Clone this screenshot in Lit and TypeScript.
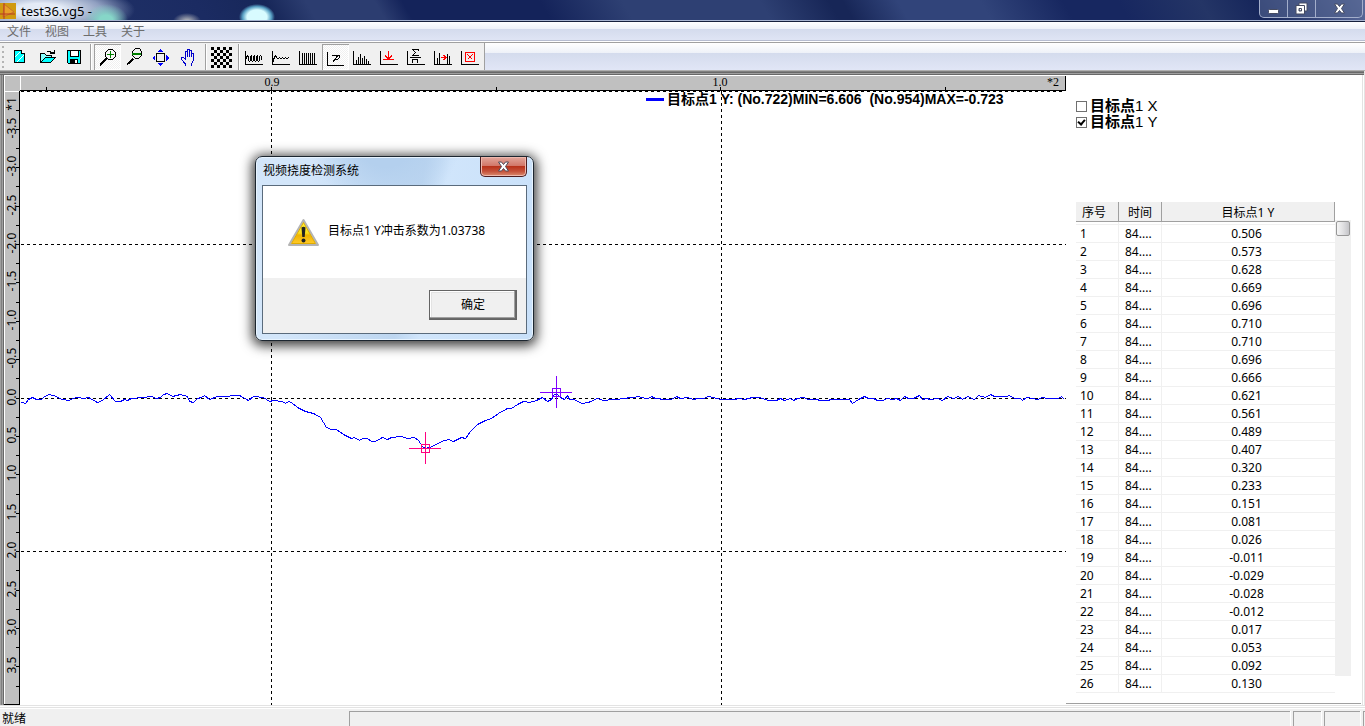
import { LitElement, html, svg, css } from "lit";
import { customElement, state } from "lit/decorators.js";

const VALUES = [
  "0.506", "0.573", "0.628", "0.669", "0.696", "0.710", "0.710", "0.696", "0.666",
  "0.621", "0.561", "0.489", "0.407", "0.320", "0.233", "0.151", "0.081", "0.026",
  "-0.011", "-0.029", "-0.028", "-0.012", "0.017", "0.053", "0.092", "0.130",
];

const CURVE =
  "20,402 22,402 25,403 28,399 32,397 36,399 41,399 44,396 49,394 56,396 61,399 69,400 72,398 77,397 83,398 88,397 " +
  "97,402 102,400 109,394 115,401 120,401 124,399 127,400 131,398 142,397 151,396 156,398 160,397 163,394 167,393 " +
  "172,396 180,394 187,396 189,401 193,402 197,398 201,397 204,395 209,399 217,396 227,396 232,395 239,395 248,400 " +
  "253,396 263,397 269,401 273,400 282,401 285,403 288,401 291,402 297,407 305,411 313,413 320,417 326,427 331,429 " +
  "336,429 343,434 351,438 354,437 359,440 362,438 367,438 371,441 375,441 382,437 387,439 391,437 401,436 407,438 " +
  "414,437 418,440 422,446 425,448 429,447 436,444 441,441 448,439 453,441 461,437 465,438 470,431 477,424 485,420 " +
  "491,418 498,413 507,408 511,408 517,404 523,401 529,402 536,400 542,397 547,401 551,399 553,395 556,393 560,397 " +
  "564,399 567,395 569,399 573,399 582,403 588,402 597,398 603,400 613,399 626,398 628,397 633,397 638,396 645,398 " +
  "648,398 651,396 655,398 659,398 661,399 671,399 676,396 680,398 687,397 693,399 697,398 703,398 708,396 713,397 " +
  "720,399 733,399 739,398 744,399 752,397 759,397 768,400 776,400 780,398 784,400 790,398 793,400 797,398 803,397 " +
  "808,399 816,399 820,400 827,400 831,399 849,399 852,403 858,399 864,396 868,398 873,398 877,400 882,400 887,398 " +
  "892,399 896,398 900,400 904,396 908,398 913,398 919,395 922,399 926,398 930,399 937,398 942,400 947,396 953,398 " +
  "958,396 962,399 967,396 974,399 978,395 985,397 990,394 994,396 1006,396 1009,395 1014,398 1020,398 1022,400 " +
  "1026,397 1032,398 1037,399 1042,397 1047,398 1058,398 1061,396 1064,399";

const axes = svg`<path class="k" d="M4.500 7V20.500H22"/>`;

const icons: Record<string, unknown> = {
  new: svg`<path fill="#0ff" stroke="#000" d="M8.500 6.500H15.500L18.500 9.500V18.500H8.500Z"/><path fill="#fff" stroke="#000" d="M15.500 6.500V9.500H18.500"/><path stroke="#fff" d="M9 13L14 8M11 18L18 11"/>`,
  open: svg`<path fill="#8ff" stroke="#000" d="M7.500 18.500V9.500H11.500L13.500 11.500H18.500V13.500H12.500L7.500 18.500"/><path fill="#0ff" stroke="#000" d="M7.500 18.500L12.500 13.500H22.500L17.500 18.500Z"/><path class="k" d="M14 7.500H16.500L18.500 8.500H21M21.500 5.500V10M17 9.500H21"/>`,
  save: svg`<path fill="#0ff" stroke="#000" d="M7.500 6.500H20.500V19.500H8.500L7.500 18.500Z"/><path fill="#fff" stroke="#000" d="M10.500 6.500H18.500V12.500H10.500Z"/><path fill="#000" d="M10 15H18V20H10Z"/><path fill="#fff" d="M15 16H17V19H15Z"/>`,
  zoomin: svg`<path class="k" d="M14.500 5.500H18.500L21.500 8.500V12.500L18.500 15.500H14.500L11.500 12.500V8.500Z"/><path fill="#008000" d="M13 10H20V11H13ZM16 7H17V14H16Z"/><path class="k" stroke-width="2" d="M12.500 14.500L6 21.500"/>`,
  zoomout: svg`<path class="k" d="M14.500 4.500H18.500L20.500 7.500V11.500L17.500 14.500H14.500L11.500 11.500V7.500Z"/><path fill="#008000" d="M11 9H20V11H11Z"/><path class="k" stroke-width="2" d="M12.500 14.500L6 20.500"/>`,
  pan: svg`<rect class="k" x="8.500" y="9.500" width="8" height="8"/><path fill="#00f" d="M10 8H15L12.500 5ZM10 19H15L12.500 22.500ZM7 11V17L4 14ZM18 11V17L21 14Z"/>`,
  hand: svg`<path stroke="#00c" fill="none" d="M10.500 22V20L6.500 15.500V13.500H8.500L10.500 15.500V7.500H12.500V13V5.500H14.500V13V6.500H16.500V13V9.500H18.500V16.500L16.500 20V22"/>`,
  check: svg`${Array.from({ length: 49 }, (_, i) => i).filter((i) => i % 2 === 0).map((i) => svg`<rect x=${3 + (i % 7) * 3} y=${3 + Math.floor(i / 7) * 3} width="3" height="3"/>`)}`,
  wave: svg`${axes}<path class="k" d="M5.500 15V13.500L6.500 11.500L7.500 12.500V16.500L8.500 17.500L9.500 16.500V12.500L10.500 11.500V16.500L11.500 17.500L12.500 16.500V12.500L13.500 11.500V16.500L14.500 17.500L15.500 16.500V12.500L16.500 11.500V16.500L17.500 17.500L18.500 16.500V12.500L19.500 11.500L20.500 12.500V16"/>`,
  decay: svg`${axes}<path class="k" d="M5.500 18V15.500L7.500 11.500L9.500 14.500H10.500L11.500 13.500L12.500 14.500H13.500L14.500 13.500L15.500 14.500H16.500L17.500 13.500L18.500 14.500H19.500L20.500 13.500L21.500 14.500"/>`,
  bars: svg`${axes}<path class="k" d="M7.500 9V20M9.500 9V20M11.500 9V20M13.500 9V20M15.500 9V20M17.500 9V20M19.500 9V20"/>`,
  peak: svg`<path class="k" d="M5.500 8V21.500H22"/><path class="k" d="M10 11.500H17.500V13.500L15.500 15.500H11.500M15.500 12L10.500 18.500"/>`,
  spectrum: svg`${axes}<path class="k" d="M7.500 16V20M9.500 13V20M11.500 10V20M13.500 14V20M15.500 12V20M17.500 15V20M19.500 17V20"/>`,
  zero: svg`${axes}<path stroke="#f00" fill="none" d="M7 15.500H18M12.500 7V15M9 11.500L12.500 15L16 11.500M11 13.500H14"/>`,
  mean: svg`${axes}<path class="k" d="M15.500 6.500V5.500H9.500L12.500 8.500L9.500 11.500H15.500V10.500M7 13.500H18M9.500 19V15.500H14.500V19"/>`,
  shift: svg`${axes}<path class="k" d="M7.500 14V20M9.500 9V20M17.500 10V20M19.500 12V20"/><path stroke="#f00" fill="none" d="M11 13.500H16M13.500 11L16 13.500L13.500 16"/>`,
  clear: svg`${axes}<path stroke="#f00" fill="none" d="M8.500 8.500H17.500V17.500H8.500ZM10.500 10.500L15.500 15.500M15.500 10.500L10.500 15.500"/>`,
};

const TOOLS: string[][] = [
  ["new", "open", "save"],
  ["zoomin", "zoomout", "pan", "hand"],
  ["check"],
  ["wave", "decay", "bars", "peak", "spectrum", "zero", "mean", "shift", "clear"],
];
const TOOL_NAMES: Record<string, string> = {
  new: "新建", open: "打开", save: "保存", zoomin: "放大", zoomout: "缩小", pan: "全图", hand: "平移",
  check: "棋盘", wave: "波形", decay: "衰减", bars: "采样", peak: "冲击系数", spectrum: "频谱",
  zero: "归零", mean: "平均", shift: "平移曲线", clear: "清除",
};

@customElement("deflection-plot")
class DeflectionPlot extends LitElement {
  static styles = css`
    :host { display: block; flex: 1; min-width: 0; overflow: hidden; }
    .plot { display: block; width: 100%; height: 100%; shape-rendering: crispEdges; }
    .ink { stroke: #000; fill: none; }
    .dash { stroke: #000; stroke-dasharray: 3 3; }
    .curve { stroke: #00f; fill: none; }
    .vlabel { font: 12px "Noto Sans", sans-serif; text-anchor: middle; }
    .hlabel { font: 12px "Liberation Serif", serif; text-anchor: middle; }
    .legend { font: bold 14px "Liberation Sans", "Noto Sans CJK SC", sans-serif; white-space: pre; }
  `;

  private marker(x: number, y: number, color: string) {
    return svg`<path stroke=${color} fill="none" d="M${x - 16} ${y}.500h32M${x}.500 ${y - 16}v32M${x - 4}.500 ${y - 4}.500h8v8h-8z"/>`;
  }

  render() {
    const half = Array.from({ length: 31 }, (_, i) => i - 15);
    return html`<svg class="plot" role="img" aria-label="目标点1 Y">
      <g transform="translate(-4 -75)">
        <rect x="4" y="75" width="1062" height="1" fill="#fff" />
        <rect x="5" y="76" width="15" height="629" fill="#c0c0c0" />
        <rect x="21" y="76" width="1045" height="15" fill="#c0c0c0" />
        <rect x="20" y="76" width="1" height="15" fill="#fff" />
        <rect x="5" y="91" width="15" height="1" fill="#fff" />
        <path class="ink" d="M20 90.500H1065.500V76M19.500 91V704.500H4" />
        <path class="dash" d="M21 91.500H1065M21 244.500H1066M21 398.500H1066M21 551.500H1066M271.500 91V705M721.500 91V705" />
        <path class="ink" d="M46.500 87V90M271.500 87V90M496.500 87V90M720.500 87V90M945.500 87V90" />
        ${half.map((i) => {
          const y = Math.floor(398 + i * 19.2);
          return svg`<path class="ink" d="M16 ${y}.500H19"/>`;
        })}
        ${half.filter((i) => i % 2 === 0).map((i) => {
          const y = Math.floor(398 + i * 19.2);
          return svg`<text class="vlabel" transform="translate(16 ${y - 1}) rotate(-90)">${(i / 4).toFixed(1) === "-0.0" ? "0.0" : (i / 4).toFixed(1)}</text>`;
        })}
        <text class="vlabel" transform="translate(16 104) rotate(-90)">*1</text>
        <text class="hlabel" x="272" y="86">0.9</text>
        <text class="hlabel" x="720" y="86">1.0</text>
        <text class="hlabel" x="1053" y="86">*2</text>
        <rect x="646" y="98" width="18" height="3" fill="#00f" />
        <text class="legend" x="667" y="104">目标点1 Y: (No.722)MIN=6.606  (No.954)MAX=-0.723</text>
        <polyline class="curve" points=${CURVE} transform="translate(0.500 0.500)" />
        ${this.marker(425, 448, "#ff0080")}
        ${this.marker(556, 392, "#8000ff")}
      </g>
    </svg>`;
  }
}

@customElement("message-dialog")
class MessageDialog extends LitElement {
  static styles = css`
    :host { position: absolute; left: 255px; top: 156px; font: 12px/16px "Noto Sans", "Noto Sans CJK SC", sans-serif; }
    .frame {
      box-sizing: border-box; width: 279px; height: 185px; border: 1px solid #1c2630; border-radius: 7px; padding: 0 6px 6px;
      display: flex; flex-direction: column;
      background: radial-gradient(circle at 130px -20px, #b4d0ee 0 30px, transparent 75px), linear-gradient(100deg, #d3e6fa 0 18%, #bdd6f0 55%, #d0e5fb 63%, #c8e0f9);
      box-shadow: inset 0 0 0 1px #e8f4ff, 0 2px 12px 3px rgba(0, 0, 0, 0.75);
    }
    .title { display: flex; justify-content: space-between; height: 28px; }
    .name { padding-top: 6px; padding-left: 1px; }
    .close {
      width: 47px; height: 20px; padding: 0; border: 1px solid #4c1d20; border-top: 0; border-radius: 0 0 5px 5px;
      background: linear-gradient(#e3a79c, #d2786a 45%, #b8321b 50%, #c5513a 75%, #da8d70); box-shadow: inset 0 0 0 1px #efb9ae;
      display: flex; justify-content: center; align-items: center;
    }
    .body { flex: 1; display: flex; flex-direction: column; border: 1px solid #5a6b7c; background: #f0f0f0; }
    .message { display: flex; align-items: center; gap: 9px; height: 92px; padding-left: 25px; background: #fff; }
    .text { padding-bottom: 3px; }
    .actions { flex: 1; display: flex; justify-content: flex-end; align-items: flex-start; padding: 12px 9px 0 0; }
    .ok {
      width: 88px; height: 30px; padding: 0; font: inherit; background: #f0f0f0; color: #000; border: 1px solid #646464;
      box-shadow: inset -1px -1px #696969, inset -2px -2px #a0a0a0, inset 1px 1px #fff, inset 2px 2px #e3e3e3;
    }
  `;

  render() {
    return html`<section class="frame" role="alertdialog" aria-label="视频挠度检测系统">
      <header class="title">
        <span class="name">视频挠度检测系统</span>
        <button class="close" aria-label="关闭" @click=${() => this.remove()}>
          <svg width="13" height="11"><path d="M1.500 1H4.500L6.500 3.500L8.500 1H11.500L8.500 5.500L11.500 10H8.500L6.500 7.500L4.500 10H1.500L4.500 5.500Z" fill="#fff" stroke="#4f4a58" /></svg>
        </button>
      </header>
      <div class="body">
        <div class="message">
          <svg width="31" height="29" viewBox="0 0 31 29">
            <defs><linearGradient id="amber" x2="0" y2="1"><stop offset="0" stop-color="#fff23c" /><stop offset="0.500" stop-color="#fbe01c" /><stop offset="0.600" stop-color="#f0b400" /><stop offset="1" stop-color="#ffc928" /></linearGradient></defs>
            <path d="M15.500 2L30 27H1Z" fill="#d2d2d2" stroke="#b4b4b4" stroke-width="2" stroke-linejoin="round" />
            <path d="M15.500 4.500L27.500 25.500H3.500Z" fill="url(#amber)" stroke="#e0ac00" />
            <path d="M13.500 9.500Q15.500 8 17.500 9.500L16.700 19H14.300Z" fill="#222" /><circle cx="15.500" cy="22.500" r="2" fill="#222" />
          </svg>
          <span class="text">目标点1 Y冲击系数为1.03738</span>
        </div>
        <div class="actions"><button class="ok" @click=${() => this.remove()}>确定</button></div>
      </div>
    </section>`;
  }
}

@customElement("app-root")
class AppRoot extends LitElement {
  @state() private showX = false;
  @state() private showY = true;

  static styles = css`
    :host {
      display: flex; flex-direction: column; position: relative; height: 100vh; overflow: hidden; background: #f0f0f0;
      font: 12px/16px "Noto Sans", "Noto Sans CJK SC", sans-serif; color: #000;
    }
    .titlebar {
      display: flex; justify-content: space-between; height: 20px; border-bottom: 1px solid #a8b4d0; box-shadow: 0 1px #17203c;
      margin-bottom: 1px;
      background:
        radial-gradient(ellipse 22px 16px at 106px 20px, #86d6c8 30%, transparent),
        radial-gradient(ellipse 95px 26px at 40px 10px, #e4ebf6 0 25%, #a9b8d5d0 65%, transparent),
        radial-gradient(ellipse 14px 8px at 187px 21px, #a1a5b0 20%, transparent),
        radial-gradient(ellipse 18px 13px at 257px 17px, #d8fbff 55%, #58a0c4 80%, transparent),
        linear-gradient(60deg, #22356a 0, #1b2b62 15%, #172759 20%, #2c3d70 23% 28%, #14235a 30% 40%, #2e4073 46% 56%, #172657 61% 62%, #31447a 66% 72%, #172760 78% 82%, #243566 88%, #16265b 92%, #5c6c9c);
    }
    .caption { display: flex; gap: 5px; }
    .doc { padding-top: 3px; font-size: 13px; }
    .winbtns { display: flex; height: 17px; margin-right: 2px; border: 1px solid #a3aecb; border-top: 0; border-radius: 0 0 5px 5px; background: #55659199; }
    .winbtn { display: flex; align-items: center; justify-content: center; width: 28px; padding: 0; border: 0; border-right: 1px solid #a3aecb; background: none; }
    .winbtn:last-child { width: 46px; border-right: 0; }
    .menubar {
      display: flex; gap: 14px; box-sizing: border-box; height: 21px; padding: 2px 7px 0; border-bottom: 1px solid #a0a0a0; box-shadow: inset 0 -1px #fff, inset 0 -2px #b6bcd0;
      background: linear-gradient(#fff, #eef1f8 7px, #d4dbed 7px, #e1e6f6);
    }
    .menu { color: #6d6d6d; text-decoration: none; }
    .toolbar { display: flex; height: 27px; background: linear-gradient(#fff, #eef1f8 10px, #d4dbed 10px, #e1e6f6); border-bottom: 1px solid #b0b0b0; }
    .tools { display: flex; padding-top: 1px; background: #f0f0f0; border-right: 1px solid #a0a0a0; }
    .grip { width: 2px; margin: 2px; background: repeating-linear-gradient(#b4b4b4 0 2px, transparent 2px 5px); }
    .group { display: flex; }
    .group + .group { border-left: 1px solid #a0a0a0; margin-left: 3px; padding-left: 3px; box-shadow: inset 1px 0 #fff; }
    .group + .group ~ .group { padding-left: 2px; }
    .tool { width: 27px; height: 26px; padding: 0; border: 0; background: none; }
    .tool.on { background: repeating-conic-gradient(#fff 0 25%, #f0f0f0 0 50%) 0 0 / 2px 2px; box-shadow: inset 1px 1px #a0a0a0, inset -1px -1px #fff; }
    .glyph { display: block; shape-rendering: crispEdges; }
    .glyph .k { stroke: #000; fill: none; }
    .workspace {
      flex: 1; min-height: 0; display: flex; padding: 4px 1px 0 4px; border-right: 1px solid #e3e3e3;
      background:
        linear-gradient(#808080 1px, #696969 1px 2px, #a0a0a0 2px 3px, #696969 3px) no-repeat 0 0 / 100% 4px,
        linear-gradient(90deg, #a0a0a0 1px, #808080 1px 2px, #a0a0a0 2px 3px, #696969 3px) no-repeat 0 0 / 4px 100%,
        #fff;
    }
    .side { width: 297px; display: flex; flex-direction: column; padding: 23px 1px 0 0; box-sizing: border-box; border-right: 1px solid #e3e3e3; }
    .series { display: flex; flex-direction: column; padding-left: 10px; height: 104px; }
    .pick { display: flex; align-items: center; gap: 3px; height: 16px; font: 15px/16px "Liberation Sans", "Noto Sans CJK SC", sans-serif; }
    .pick b { font-weight: 700; }
    .box { appearance: none; width: 11px; height: 11px; margin: 0; border: 1px solid #707070; background: #fff; }
    .box:checked { position: relative; }
    .box:checked::after { content: ""; position: absolute; left: 2px; top: 0; width: 3px; height: 5px; border: solid #000; border-width: 0 2px 2px 0; transform: rotate(40deg); }
    .listing { flex: 1; display: flex; align-items: flex-start; margin-bottom: 1px; border-bottom: 1px solid #a0a0a0; padding: 0 10px; }
    .grid { flex: 1; border-collapse: separate; border-spacing: 0; table-layout: fixed; width: 260px; }
    .grid th { height: 17px; padding: 2px 0 0; font-weight: 400; background: #f0f0f0; border-right: 1px solid #a0a0a0; border-bottom: 1px solid #a0a0a0; }
    .grid th:first-child { padding-right: 6px; }
    .grid td { height: 17px; padding: 0; line-height: 17px; border-bottom: 1px solid #f0f0f0; border-right: 1px solid #f0f0f0; }
    .grid td:first-child { padding-left: 4px; }
    .grid td:nth-child(2) { padding-left: 6px; }
    .grid td:last-child { border-right: 0; text-align: center; padding-right: 4px; }
    .grid .gap td { height: 2px; }
    .c1 { width: 43px; }
    .c2 { width: 43px; }
    .track { width: 16px; height: 456px; margin-top: 18px; box-sizing: border-box; background: #f0f0f0; padding: 1px; }
    .thumb { box-sizing: border-box; height: 15px; border: 1px solid #979797; border-radius: 2px; background: linear-gradient(90deg, #f5f5f5, #e0e0e2 50%, #c4c4c8); }
    .rim { height: 4px; background: linear-gradient(#e3e3e3 1px, #fff 1px 2px, #e3e3e3 2px 3px, #fff 3px); }
    .status { display: flex; gap: 3px; height: 17px; box-sizing: border-box; padding-top: 2px; }
    .ready { width: 344px; padding-left: 2px; line-height: 16px; }
    .pane { border: solid #a0a0a0; border-width: 1px 0 0 1px; box-shadow: 1px 0 #fff; width: 27px; }
    .pane.wide { flex: 1; }
    .pane.mid { width: 35px; }
    .pane.end { width: 1px; }
  `;

  render() {
    return html`
      <header class="titlebar">
        <div class="caption">
          <svg width="16" height="19"><rect y="3" width="16" height="16" fill="#d09a10" /><path d="M4 4L14 12L3 17Z" fill="#e8a02a" stroke="#c8702a" /><path d="M0 14H15M4 3V19" stroke="#b83a20" /></svg>
          <span class="doc">test36.vg5 -</span>
        </div>
        <div class="winbtns">
          <button class="winbtn" aria-label="最小化"><svg width="13" height="12"><rect x="1.500" y="6.500" width="10" height="4" rx="1" fill="#fff" stroke="#454b62" /></svg></button>
          <button class="winbtn" aria-label="还原"><svg width="13" height="13"><path d="M4 1H12V9H4Z" fill="#fff" stroke="#454b62" /><path fill-rule="evenodd" d="M1 3.500H9.500V12H1ZM4 6.500V9H6.500V6.500Z" fill="#fff" stroke="#454b62" /></svg></button>
          <button class="winbtn" aria-label="关闭"><svg width="13" height="11"><path d="M1.500 1H4.500L6.500 3.500L8.500 1H11.500L8.500 5.500L11.500 10H8.500L6.500 7.500L4.500 10H1.500L4.500 5.500Z" fill="#fff" stroke="#454b62" /></svg></button>
        </div>
      </header>
      <nav class="menubar">
        ${["文件", "视图", "工具", "关于"].map((m) => html`<a class="menu" href="#">${m}</a>`)}
      </nav>
      <div class="toolbar">
        <div class="tools">
          <span class="grip"></span>
          ${TOOLS.map((group) => html`<div class="group">${group.map((t) => html`
            <button class="tool ${t === "zoomin" || t === "peak" ? "on" : ""}" aria-label=${TOOL_NAMES[t]}>
              <svg class="glyph" width="27" height="26">${icons[t]}</svg>
            </button>`)}</div>`)}
        </div>
      </div>
      <main class="workspace">
        <deflection-plot></deflection-plot>
        <aside class="side">
          <div class="series">
            <label class="pick"><input class="box" type="checkbox" .checked=${this.showX} @change=${() => (this.showX = !this.showX)} /><span><b>目标点</b>1 X</span></label>
            <label class="pick"><input class="box" type="checkbox" .checked=${this.showY} @change=${() => (this.showY = !this.showY)} /><span><b>目标点</b>1 Y</span></label>
          </div>
          <div class="listing">
            <table class="grid">
              <colgroup><col class="c1" /><col class="c2" /><col /></colgroup>
              <thead><tr><th>序号</th><th>时间</th><th>目标点1 Y</th></tr></thead>
              <tbody>
                <tr class="gap"><td></td><td></td><td></td></tr>
                ${VALUES.map((v, i) => html`<tr><td>${i + 1}</td><td>84....</td><td>${v}</td></tr>`)}
              </tbody>
            </table>
            <div class="track"><div class="thumb"></div></div>
          </div>
        </aside>
      </main>
      <div class="rim"></div>
      <footer class="status">
        <span class="ready">就绪</span>
        <span class="pane wide"></span><span class="pane"></span><span class="pane mid"></span><span class="pane end"></span>
      </footer>
      <message-dialog></message-dialog>
    `;
  }
}
